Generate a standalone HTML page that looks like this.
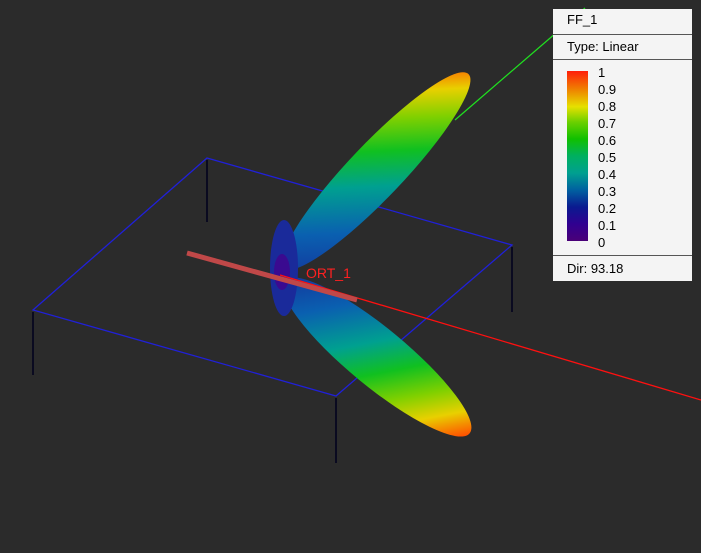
<!DOCTYPE html>
<html><head><style>
html,body{margin:0;padding:0;background:#2b2b2b;width:701px;height:553px;overflow:hidden;font-family:"Liberation Sans",sans-serif}
svg{position:absolute;left:0;top:0}
.panel{position:absolute;left:553px;top:9px;width:139px;height:272px;background:#f4f4f4;font-size:13px;color:#000}
.hl{position:absolute;left:0;width:139px;height:1px;background:#555}
.t{position:absolute;left:14px}
.bar{position:absolute;left:14px;top:62px;width:21px;height:170px;background:linear-gradient(to bottom,#ff1e0a 0%,#ee8c00 12%,#e6e000 21%,#6cd000 30%,#10c000 40%,#00b060 50%,#00a090 60%,#0060a0 70%,#0a1a90 80%,#300090 90%,#4a0078 100%)}
.lab{position:absolute;left:45px;font-size:13px;line-height:14px}
</style></head><body>
<svg width="701" height="553">
<defs>
<linearGradient id="g1" gradientUnits="userSpaceOnUse" x1="280" y1="268" x2="467" y2="74">
<stop offset="0" stop-color="#1a1a90"/><stop offset="0.28" stop-color="#0a60b0"/><stop offset="0.45" stop-color="#00a090"/><stop offset="0.58" stop-color="#10c020"/><stop offset="0.7" stop-color="#80d000"/><stop offset="0.8" stop-color="#e8d000"/><stop offset="0.9" stop-color="#ff5000"/><stop offset="1" stop-color="#ff2000"/>
</linearGradient>
<linearGradient id="g2" gradientUnits="userSpaceOnUse" x1="280" y1="278" x2="468" y2="433">
<stop offset="0" stop-color="#1a1a90"/><stop offset="0.28" stop-color="#0a60b0"/><stop offset="0.45" stop-color="#00a090"/><stop offset="0.58" stop-color="#10c020"/><stop offset="0.7" stop-color="#80d000"/><stop offset="0.8" stop-color="#e8d000"/><stop offset="0.9" stop-color="#ff5000"/><stop offset="1" stop-color="#ff2000"/>
</linearGradient>
</defs>
<g stroke="#2020d8" stroke-width="1.3" fill="none">
<polygon points="207,158 512,245 336,396 33,310"/>
</g>
<g stroke="#0a0a20" stroke-width="2">
<line x1="207" y1="160" x2="207" y2="222"/><line x1="512" y1="247" x2="512" y2="312"/>
<line x1="336" y1="398" x2="336" y2="463"/><line x1="33" y1="312" x2="33" y2="375"/>
</g>
<line x1="455" y1="120" x2="585" y2="8" stroke="#20e020" stroke-width="1.2"/>
<ellipse cx="376" cy="171" rx="134" ry="27" transform="rotate(-46.4 376 171)" fill="url(#g1)"/>
<ellipse cx="377" cy="357" rx="120" ry="29" transform="rotate(39.5 377 357)" fill="url(#g2)"/>
<ellipse cx="284" cy="268" rx="14" ry="48" fill="#1a2a9a"/>
<ellipse cx="282" cy="272" rx="8" ry="18" fill="#3a0a90"/>
<line x1="280" y1="275" x2="701" y2="400" stroke="#ff1010" stroke-width="1.3"/>
<line x1="187" y1="253" x2="357" y2="300" stroke="#c04848" stroke-width="5"/>
<text x="306" y="278" fill="#ff2020" font-family="Liberation Sans" font-size="14">ORT_1</text>
</svg>
<div class="panel">
<div class="t" style="top:3px">FF_1</div>
<div class="hl" style="top:25px"></div>
<div class="t" style="top:30px">Type: Linear</div>
<div class="hl" style="top:50px"></div>
<div class="bar"></div>
<div class="lab" style="top:57px">1</div>
<div class="lab" style="top:74px">0.9</div>
<div class="lab" style="top:91px">0.8</div>
<div class="lab" style="top:108px">0.7</div>
<div class="lab" style="top:125px">0.6</div>
<div class="lab" style="top:142px">0.5</div>
<div class="lab" style="top:159px">0.4</div>
<div class="lab" style="top:176px">0.3</div>
<div class="lab" style="top:193px">0.2</div>
<div class="lab" style="top:210px">0.1</div>
<div class="lab" style="top:227px">0</div>
<div class="hl" style="top:246px"></div>
<div class="t" style="top:252px">Dir: 93.18</div>
</div>
</body></html>
